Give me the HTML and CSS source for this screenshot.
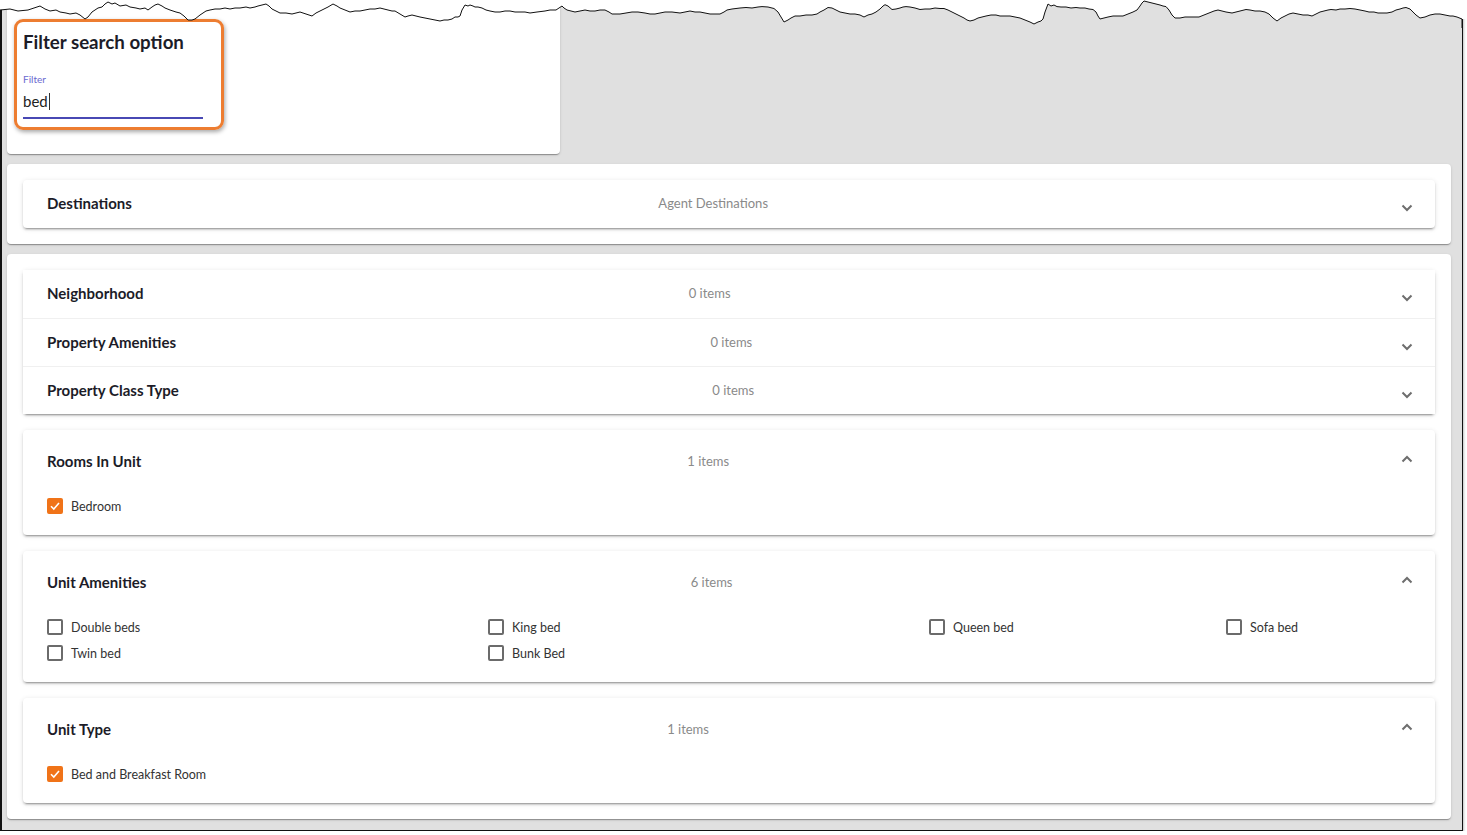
FILE: index.html
```html
<!DOCTYPE html>
<html lang="en">
<head>
    <meta charset="UTF-8">
    <meta name="viewport" content="width=device-width, initial-scale=1.0">
    <title>Filter search option</title>
    <link rel="stylesheet" href="styles.css">
</head>
<body>
  <div class="frame">

    <!-- フィルター -->
    <div class="card card-filter">
      <div class="callout"></div>
      <h2 class="filter-title">Filter search option</h2>
      <div class="field">
        <label class="field-label" for="filter">Filter</label>
        <div class="field-input" id="filter">bed<span class="caret"></span></div>
      </div>
    </div>

    <!-- Destinations -->
    <div class="card card-wide">
      <div class="panel">
        <div class="panel-header">
          <span class="panel-title">Destinations</span>
          <span class="panel-desc">Agent Destinations</span>
          <svg class="chevron" width="12" height="8" viewBox="0 0 12 8"><polyline points="1.5,1.5 6,6 10.5,1.5"/></svg>
        </div>
      </div>
    </div>

    <div class="card card-wide">
      <div class="accordion">
        <div class="panel">
          <div class="panel-header">
            <span class="panel-title">Neighborhood</span>
            <span class="panel-desc">0 items</span>
            <svg class="chevron" width="12" height="8" viewBox="0 0 12 8"><polyline points="1.5,1.5 6,6 10.5,1.5"/></svg>
          </div>
        </div>
        <div class="panel">
          <div class="panel-header">
            <span class="panel-title">Property Amenities</span>
            <span class="panel-desc">0 items</span>
            <svg class="chevron" width="12" height="8" viewBox="0 0 12 8"><polyline points="1.5,1.5 6,6 10.5,1.5"/></svg>
          </div>
        </div>
        <div class="panel">
          <div class="panel-header">
            <span class="panel-title">Property Class Type</span>
            <span class="panel-desc">0 items</span>
            <svg class="chevron" width="12" height="8" viewBox="0 0 12 8"><polyline points="1.5,1.5 6,6 10.5,1.5"/></svg>
          </div>
        </div>
      </div>

      <div class="panel panel-open">
        <div class="panel-header">
          <span class="panel-title">Rooms In Unit</span>
          <span class="panel-desc">1 items</span>
          <svg class="chevron up" width="12" height="8" viewBox="0 0 12 8"><polyline points="1.5,6.5 6,2 10.5,6.5"/></svg>
        </div>
        <div class="panel-body">
          <div class="opt"><span class="check on"><svg width="12" height="12" viewBox="0 0 12 12"><polyline points="2,6.2 4.8,9 10,3"/></svg></span>Bedroom</div>
        </div>
      </div>

      <div class="panel panel-open">
        <div class="panel-header">
          <span class="panel-title">Unit Amenities</span>
          <span class="panel-desc">6 items</span>
          <svg class="chevron up" width="12" height="8" viewBox="0 0 12 8"><polyline points="1.5,6.5 6,2 10.5,6.5"/></svg>
        </div>
        <div class="panel-body opt-grid">
          <div class="opt"><span class="check"></span>Double beds</div>
          <div class="opt"><span class="check"></span>King bed</div>
          <div class="opt"><span class="check"></span>Queen bed</div>
          <div class="opt"><span class="check"></span>Sofa bed</div>
          <div class="opt"><span class="check"></span>Twin bed</div>
          <div class="opt"><span class="check"></span>Bunk Bed</div>
        </div>
      </div>

      <div class="panel panel-open">
        <div class="panel-header">
          <span class="panel-title">Unit Type</span>
          <span class="panel-desc">1 items</span>
          <svg class="chevron up" width="12" height="8" viewBox="0 0 12 8"><polyline points="1.5,6.5 6,2 10.5,6.5"/></svg>
        </div>
        <div class="panel-body">
          <div class="opt"><span class="check on"><svg width="12" height="12" viewBox="0 0 12 12"><polyline points="2,6.2 4.8,9 10,3"/></svg></span>Bed and Breakfast Room</div>
        </div>
      </div>
    </div>

    <!-- 破れた上端 -->
    <svg class="torn" width="1467" height="28" viewBox="0 0 1467 28">
      <polygon class="torn-cover" points="0,0 0,10 10,9 18,11 28,10 34,8 40,6 45,9 50,11 56,10 60,12 66,13 70,14 76,13 80,15 85,19 88,17 92,12 98,8 102,7 105,4 108,2 112,4 115,3 120,6 126,5 130,7 136,8 140,9 145,8 148,10 152,7 155,5 158,4 162,6 165,8 170,10 176,12 180,13 184,16 188,20 192,20 195,19 200,15 203,13 206,11 210,10 215,9 220,9 225,8 230,9 235,8 240,8 246,7 250,8 255,7 258,6 262,5 266,4 269,6 272,9 276,11 280,13 286,13 292,14 296,13 300,12 306,14 312,16 316,13 320,11 324,9 328,7 333,4 337,6 340,8 345,10 350,12 355,11 360,11 365,10 370,9 375,9 380,8 384,9 388,10 392,11 395,11 400,14 405,17 408,16 412,15 416,16 420,17 425,18 430,19 435,20 440,21 444,20 448,20 452,19 455,17 458,17 460,16 462,10 465,5 468,6 470,5 473,6 475,7 478,7 482,8 486,10 490,11 495,12 500,12 505,11 510,11 515,12 520,12 525,12 530,13 537,12 545,11 550,10 556,10 559,8 562,6 564,8 567,10 571,11 575,12 580,11 585,10 590,11 595,11 600,10 605,10 609,12 612,14 616,14 620,14 626,13 632,12 638,12 645,13 650,14 655,14 660,13 665,12 672,12 680,13 685,12 690,11 695,12 700,12 705,13 710,14 715,14 720,14 724,12 727,10 732,9 740,8 746,7.5 752,8 758,7 762,6.6 768,7 774,8.5 778,12 781,17 784,22 788,20 791,18 795,16 800,16 806,15 812,15 817,14 820,12 824,10 828,7.5 832,8 836,10 840,12 845,13 850,14 855,14 860,15 864,17 868,15 872,14 876,12 880,9 883,6 885,4.7 888,6 892,9.5 896,9 900,8 903,7 906,6.6 910,7 915,8 920,9.5 925,9 930,9 935,8 940,8.5 944,8.5 948,10 952,12 956,14 960,16 964,18 967,20 970,21 974,20 978,18 982,17 986,16 991,15 996,15 1000,16 1005,16 1010,16 1015,17 1020,18 1025,20 1030,22 1034,24 1038,22 1041,21 1043,19 1045,12 1048,4 1051,6 1054,5 1057,6.6 1061,7 1066,7 1071,8 1076,7.5 1080,8 1085,8 1089,9 1093,9.5 1096,12 1098,16 1100,19 1104,18 1108,17 1113,16 1118,16 1123,16 1128,14 1133,12 1137,10 1140,6 1142,3 1144,1 1148,2 1152,3 1156,4 1160,5 1163,6 1166,6.6 1169,10 1172,15 1175,18 1180,18 1185,17 1190,17 1195,17 1199,17 1204,15 1209,13 1214,11 1218,10 1222,11 1226,12 1232,13 1236,12 1240,11 1246,9.5 1250,10 1255,11 1260,11 1265,12 1269,14 1273,18 1277,21 1281,18 1285,16 1289,14 1293,13 1298,14 1303,15 1308,15 1312,16 1316,14 1320,12 1324,11 1328,10 1331,9.5 1336,10 1340,9 1345,9 1350,8.5 1355,9 1360,10 1365,11 1369,12 1374,12 1378,13 1383,13 1387,13 1392,12 1396,10 1400,9 1403,8 1406,7.5 1410,9 1413,12 1416,15 1420,18 1425,17 1430,15 1435,14 1440,14 1445,15 1450,16 1453,16 1457,17 1462,19 1467,19 1467,0"/>
      <polyline class="torn-line" points="0,10 10,9 18,11 28,10 34,8 40,6 45,9 50,11 56,10 60,12 66,13 70,14 76,13 80,15 85,19 88,17 92,12 98,8 102,7 105,4 108,2 112,4 115,3 120,6 126,5 130,7 136,8 140,9 145,8 148,10 152,7 155,5 158,4 162,6 165,8 170,10 176,12 180,13 184,16 188,20 192,20 195,19 200,15 203,13 206,11 210,10 215,9 220,9 225,8 230,9 235,8 240,8 246,7 250,8 255,7 258,6 262,5 266,4 269,6 272,9 276,11 280,13 286,13 292,14 296,13 300,12 306,14 312,16 316,13 320,11 324,9 328,7 333,4 337,6 340,8 345,10 350,12 355,11 360,11 365,10 370,9 375,9 380,8 384,9 388,10 392,11 395,11 400,14 405,17 408,16 412,15 416,16 420,17 425,18 430,19 435,20 440,21 444,20 448,20 452,19 455,17 458,17 460,16 462,10 465,5 468,6 470,5 473,6 475,7 478,7 482,8 486,10 490,11 495,12 500,12 505,11 510,11 515,12 520,12 525,12 530,13 537,12 545,11 550,10 556,10 559,8 562,6 564,8 567,10 571,11 575,12 580,11 585,10 590,11 595,11 600,10 605,10 609,12 612,14 616,14 620,14 626,13 632,12 638,12 645,13 650,14 655,14 660,13 665,12 672,12 680,13 685,12 690,11 695,12 700,12 705,13 710,14 715,14 720,14 724,12 727,10 732,9 740,8 746,7.5 752,8 758,7 762,6.6 768,7 774,8.5 778,12 781,17 784,22 788,20 791,18 795,16 800,16 806,15 812,15 817,14 820,12 824,10 828,7.5 832,8 836,10 840,12 845,13 850,14 855,14 860,15 864,17 868,15 872,14 876,12 880,9 883,6 885,4.7 888,6 892,9.5 896,9 900,8 903,7 906,6.6 910,7 915,8 920,9.5 925,9 930,9 935,8 940,8.5 944,8.5 948,10 952,12 956,14 960,16 964,18 967,20 970,21 974,20 978,18 982,17 986,16 991,15 996,15 1000,16 1005,16 1010,16 1015,17 1020,18 1025,20 1030,22 1034,24 1038,22 1041,21 1043,19 1045,12 1048,4 1051,6 1054,5 1057,6.6 1061,7 1066,7 1071,8 1076,7.5 1080,8 1085,8 1089,9 1093,9.5 1096,12 1098,16 1100,19 1104,18 1108,17 1113,16 1118,16 1123,16 1128,14 1133,12 1137,10 1140,6 1142,3 1144,1 1148,2 1152,3 1156,4 1160,5 1163,6 1166,6.6 1169,10 1172,15 1175,18 1180,18 1185,17 1190,17 1195,17 1199,17 1204,15 1209,13 1214,11 1218,10 1222,11 1226,12 1232,13 1236,12 1240,11 1246,9.5 1250,10 1255,11 1260,11 1265,12 1269,14 1273,18 1277,21 1281,18 1285,16 1289,14 1293,13 1298,14 1303,15 1308,15 1312,16 1316,14 1320,12 1324,11 1328,10 1331,9.5 1336,10 1340,9 1345,9 1350,8.5 1355,9 1360,10 1365,11 1369,12 1374,12 1378,13 1383,13 1387,13 1392,12 1396,10 1400,9 1403,8 1406,7.5 1410,9 1413,12 1416,15 1420,18 1425,17 1430,15 1435,14 1440,14 1445,15 1450,16 1453,16 1457,17 1462,19 1462,28"/>
    </svg>
  </div>
</body>
</html>
```

FILE: styles.css
```css
/* 共通のスタイル */
body {
    margin: 0;
    background: #fff;
    font-family: Lato, "Liberation Sans", sans-serif;
    color: #1c1c28;
}
.frame {
    position: relative;
    box-sizing: border-box;
    width: 1463px;
    height: 831px;
    background: #e0e0e0;
    border: 1px solid #111;
    border-top: none;
    border-left-width: 2px;
    padding: 0 11px 0 5px;
    box-shadow: 1px 1px 2px rgba(0, 0, 0, 0.25);
}

/* カード */
.card {
    background: #fff;
    border-radius: 4px;
    box-shadow: 0 2px 1px -1px rgba(0, 0, 0, 0.2), 0 1px 1px 0 rgba(0, 0, 0, 0.14), 0 1px 3px 0 rgba(0, 0, 0, 0.12);
}
.card-filter {
    position: relative;
    box-sizing: border-box;
    width: 553px;
    height: 154px;
    padding: 30px 16px 0;
    border-radius: 0 0 4px 4px;
    margin-bottom: 10px;
}
.card-wide {
    padding: 16px;
    margin-bottom: 10px;
}

/* 注釈の枠 */
.callout {
    position: absolute;
    left: 7px;
    top: 19px;
    width: 210px;
    height: 111px;
    box-sizing: border-box;
    border: 3px solid #ed7d31;
    border-radius: 9px;
    box-shadow: 1px 2px 4px rgba(0, 0, 0, 0.35);
}
.filter-title {
    margin: 0;
    font-size: 18.7px;
    line-height: 24px;
    font-weight: 700;
}
.field {
    width: 180px;
    margin-top: 19px;
}
.field-label {
    display: block;
    font-size: 10px;
    line-height: 12px;
    color: #6a6ad0;
}
.field-input {
    margin-top: 6px;
    font-size: 15px;
    line-height: 20px;
    padding-bottom: 6px;
    border-bottom: 2px solid #4848b4;
    color: #222;
}
.caret {
    display: inline-block;
    width: 1px;
    height: 17px;
    margin-left: 1px;
    vertical-align: -3px;
    background: #333;
}

/* パネル */
.panel {
    background: #fff;
    border-radius: 4px;
    box-shadow: 0 3px 1px -2px rgba(0, 0, 0, 0.2), 0 2px 2px 0 rgba(0, 0, 0, 0.14), 0 1px 5px 0 rgba(0, 0, 0, 0.12);
}
.accordion {
    border-radius: 4px;
    box-shadow: 0 3px 1px -2px rgba(0, 0, 0, 0.2), 0 2px 2px 0 rgba(0, 0, 0, 0.14), 0 1px 5px 0 rgba(0, 0, 0, 0.12);
}
.accordion .panel {
    box-shadow: none;
    border-radius: 0;
}
.accordion .panel + .panel .panel-header {
    border-top: 1px solid #f0f0f0;
}
.panel-open {
    margin-top: 16px;
}
.panel-header {
    display: flex;
    align-items: center;
    box-sizing: border-box;
    height: 48px;
    padding: 0 22px 2px 24px;
}
.panel-open .panel-header {
    height: 64px;
}
.panel-title {
    flex: 1 1 auto;
    font-size: 15px;
    font-weight: 700;
    color: #1c1c28;
}
.panel-desc {
    flex: 2 1 auto;
    padding-left: 210px;
    font-size: 13px;
    color: #8a8a8a;
}
.chevron {
    flex: none;
    margin-top: 10px;
}
.chevron.up {
    margin-top: -4px;
}
.chevron polyline {
    fill: none;
    stroke: #6e6e6e;
    stroke-width: 2;
}

/* チェックボックス */
.panel-body {
    margin-top: -1px;
    padding: 0 24px 16px;
}
.opt-grid {
    display: grid;
    grid-template-columns: 441px 441px 297px 1fr;
}
.opt {
    display: flex;
    align-items: center;
    gap: 8px;
    height: 26px;
    font-size: 12.5px;
    color: #333;
}
.check {
    flex: none;
    display: flex;
    align-items: center;
    justify-content: center;
    box-sizing: border-box;
    width: 16px;
    height: 16px;
    border: 2px solid #6b6b6b;
    border-radius: 2px;
}
.check.on {
    background: #f07318;
    border-color: #f07318;
}
.check polyline {
    fill: none;
    stroke: #fff;
    stroke-width: 1.6;
}

/* 破れた上端 */
.torn {
    position: absolute;
    top: 0;
    left: -2px;
}
.torn-cover {
    fill: #fff;
}
.torn-line {
    fill: none;
    stroke: #111;
    stroke-width: 1;
}
```
